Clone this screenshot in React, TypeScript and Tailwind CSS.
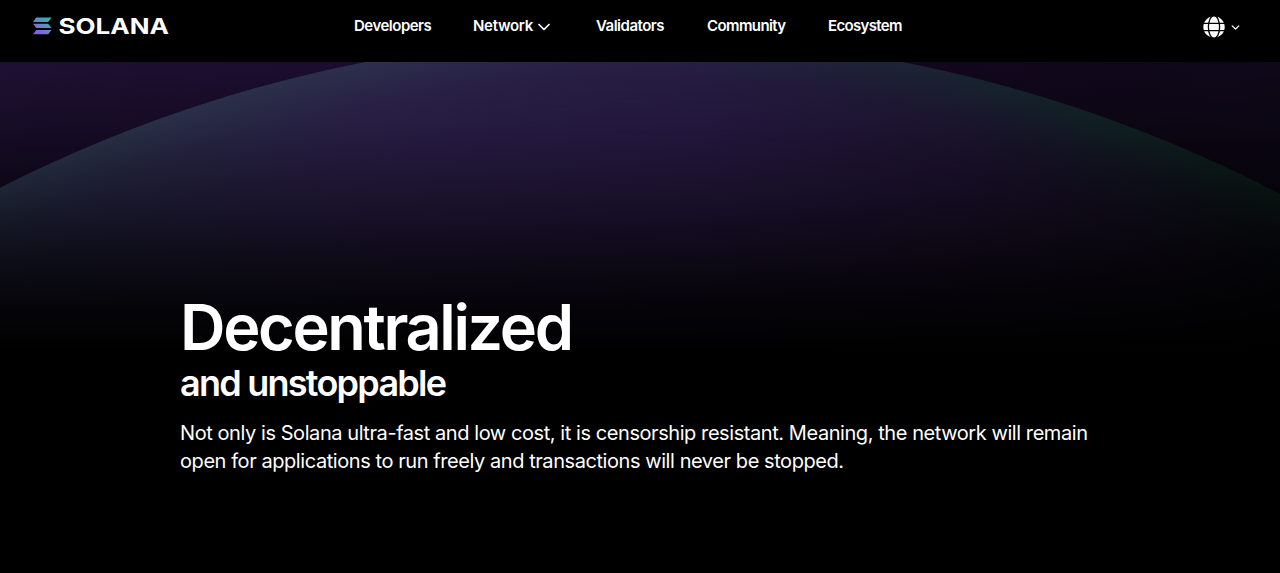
import { FiChevronDown } from "react-icons/fi";

function SolanaLogo() {
  return (
    <svg
      viewBox="0 -8 144 36"
      className="h-9 w-36"
      role="img"
      aria-label="Solana"
    >
      <defs>
        <linearGradient
          id="mark"
          gradientUnits="userSpaceOnUse"
          x1="3"
          y1="18"
          x2="16"
          y2="1"
        >
          <stop offset="0" stopColor="#8a55e8" />
          <stop offset="0.5" stopColor="#6486cc" />
          <stop offset="1" stopColor="#35b8a0" />
        </linearGradient>
      </defs>
      <g fill="url(#mark)">
        <path d="M4.2 1.5H19.6L16.2 5.9H1Z" />
        <path d="M1 7.7H16.2L19.6 12.1H4.2Z" />
        <path d="M4.2 13.9H19.6L16.2 18.3H1Z" />
      </g>
      <text
        x="26.5"
        y="18"
        textLength="110.5"
        lengthAdjust="spacingAndGlyphs"
        className="fill-white font-['Inter',sans-serif] text-[22px] font-bold"
      >
        SOLANA
      </text>
    </svg>
  );
}

function GlobeIcon() {
  return (
    <svg viewBox="0 0 22 22" className="size-[22px]" fill="none">
      <circle cx="11" cy="11" r="10.7" className="fill-white" />
      <g stroke="#000" strokeWidth="1.3">
        <ellipse cx="11" cy="11" rx="5.6" ry="11.4" />
        <path d="M0 7.3H22M0 14.6H22" />
      </g>
    </svg>
  );
}

function Horizon() {
  return (
    <svg
      viewBox="0 62 1280 511"
      preserveAspectRatio="none"
      className="absolute inset-0 h-full w-full"
      aria-hidden="true"
    >
      <defs>
        <linearGradient id="sky">
          <stop offset="0" stopColor="#1e1033" />
          <stop offset="0.3" stopColor="#1b0c2d" />
          <stop offset="0.75" stopColor="#12061c" />
          <stop offset="1" stopColor="#0e0819" />
        </linearGradient>
        <linearGradient id="skyShade" x1="0" y1="0" x2="0" y2="1">
          <stop offset="0" stopColor="#000" stopOpacity="0" />
          <stop offset="0.25" stopColor="#000" stopOpacity="0.35" />
        </linearGradient>
        <linearGradient id="planet">
          <stop offset="0" stopColor="#262745" />
          <stop offset="0.3" stopColor="#2a1d47" />
          <stop offset="0.55" stopColor="#261841" />
          <stop offset="0.75" stopColor="#1e1231" />
          <stop offset="0.9" stopColor="#150f22" />
          <stop offset="1" stopColor="#0c0a15" />
        </linearGradient>
        <linearGradient id="rimColor">
          <stop offset="0" stopColor="#2b364c" />
          <stop offset="0.3" stopColor="#2d2f4c" />
          <stop offset="0.5" stopColor="#262644" />
          <stop offset="0.7" stopColor="#1c2536" />
          <stop offset="0.85" stopColor="#112426" />
          <stop offset="1" stopColor="#0b1d17" />
        </linearGradient>
        <radialGradient
          id="rimFade"
          gradientUnits="userSpaceOnUse"
          cx="634"
          cy="1435"
          r="1399"
        >
          <stop offset="0.93" stopColor="#fff" stopOpacity="0" />
          <stop offset="0.97" stopColor="#fff" stopOpacity="0.3" />
          <stop offset="1" stopColor="#fff" />
        </radialGradient>
        <linearGradient id="fade" x1="0" y1="0" x2="0" y2="1">
          <stop offset="0" stopColor="#000" stopOpacity="0" />
          <stop offset="0.12" stopColor="#000" stopOpacity="0.08" />
          <stop offset="0.25" stopColor="#000" stopOpacity="0.32" />
          <stop offset="0.4" stopColor="#000" stopOpacity="0.69" />
          <stop offset="0.48" stopColor="#000" stopOpacity="0.87" />
          <stop offset="0.57" stopColor="#000" />
        </linearGradient>
        <mask id="rim">
          <circle cx="634" cy="1435" r="1399" fill="url(#rimFade)" />
        </mask>
        <clipPath id="disc">
          <circle cx="634" cy="1435" r="1399" />
        </clipPath>
      </defs>
      <rect y="62" width="1280" height="511" fill="url(#sky)" />
      <rect y="62" width="1280" height="511" fill="url(#skyShade)" />
      <rect
        y="62"
        width="1280"
        height="511"
        fill="url(#planet)"
        clipPath="url(#disc)"
      />
      <rect
        y="62"
        width="1280"
        height="511"
        fill="url(#rimColor)"
        mask="url(#rim)"
      />
      <rect y="62" width="1280" height="511" fill="url(#fade)" />
    </svg>
  );
}

export default function App() {
  return (
    <div className="flex h-screen flex-col overflow-hidden bg-black font-['Inter',sans-serif] text-white">
      <header className="flex h-[62px] shrink-0 items-start justify-between pr-[38px] pl-8">
        <a href="#" className="mt-2 w-[322px]">
          <SolanaLogo />
        </a>
        <nav className="mt-[14px] flex flex-1 items-center text-[15px] leading-6 font-semibold tracking-[-0.5px]">
          <a href="#" className="w-[119px]">
            Developers
          </a>
          <a
            href="#"
            className="flex w-[123px] items-center gap-px tracking-[-0.3px]"
          >
            Network
            <FiChevronDown className="mt-0.5 size-5" />
          </a>
          <a href="#" className="w-[111px]">
            Validators
          </a>
          <a href="#" className="w-[121px] tracking-[-0.6px]">
            Community
          </a>
          <a href="#" className="tracking-[-0.65px]">
            Ecosystem
          </a>
        </nav>
        <button className="mt-4 flex items-center gap-1">
          <GlobeIcon />
          <FiChevronDown className="size-[13px]" strokeWidth={2.5} />
        </button>
      </header>

      <main className="relative flex-1">
        <Horizon />
        <div className="relative pt-[229px] pl-[180px]">
          <h1 className="font-semibold">
            <span className="block text-[63px] leading-[72px] tracking-[-2.35px]">
              Decentralized
            </span>
            <span className="block text-[36px] leading-[40px] tracking-[-1.75px]">
              and unstoppable
            </span>
          </h1>
          <p className="mt-4 text-[20px] leading-[28px] tracking-[-0.43px] whitespace-nowrap">
            Not only is Solana ultra-fast and low cost, it is censorship
            resistant. Meaning, the network will remain
            <br />
            open for applications to run freely and transactions will never be
            stopped.
          </p>
        </div>
      </main>
    </div>
  );
}
